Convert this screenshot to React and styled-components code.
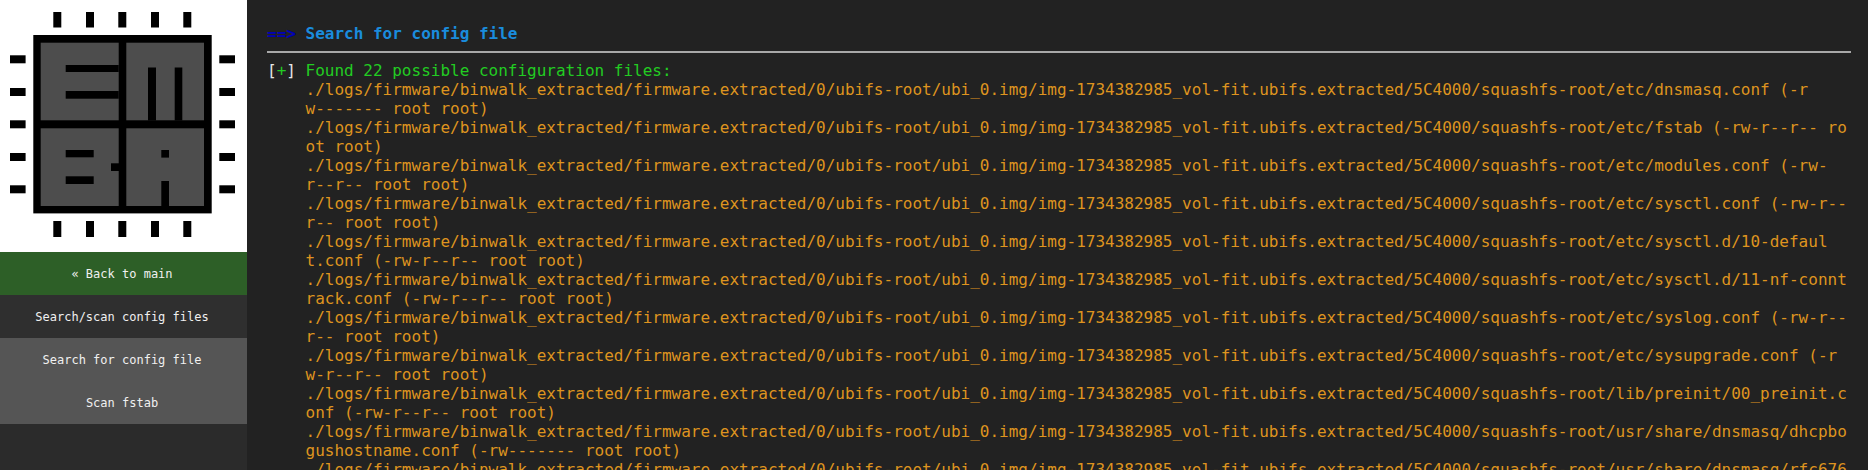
import React from "react";
import styled, { createGlobalStyle } from "styled-components";

const ROOT = "./logs/firmware/binwalk_extracted/firmware.extracted/0/ubifs-root/ubi_0.img/img-1734382985_vol-fit.ubifs.extracted/5C4000/squashfs-root";

// the tool output wraps at fixed places, so the breaks are kept in the data
const FILES = [
  "/etc/dnsmasq.conf (-r\nw------- root root)",
  "/etc/fstab (-rw-r--r-- ro\not root)",
  "/etc/modules.conf (-rw-\nr--r-- root root)",
  "/etc/sysctl.conf (-rw-r--\nr-- root root)",
  "/etc/sysctl.d/10-defaul\nt.conf (-rw-r--r-- root root)",
  "/etc/sysctl.d/11-nf-connt\nrack.conf (-rw-r--r-- root root)",
  "/etc/syslog.conf (-rw-r--\nr-- root root)",
  "/etc/sysupgrade.conf (-r\nw-r--r-- root root)",
  "/lib/preinit/00_preinit.c\nonf (-rw-r--r-- root root)",
  "/usr/share/dnsmasq/dhcpbo\ngushostname.conf (-rw------- root root)",
  "/usr/share/dnsmasq/rfc676\n1.conf (-rw-r--r-- root root)",
];

const MENU = [
  { label: "« Back to main", kind: "back" },
  { label: "Search/scan config files", kind: "section" },
  { label: "Search for config file", kind: "item" },
  { label: "Scan fstab", kind: "item" },
];

const MENU_BG = { back: "#2d5f27", section: "#2f2f2f", item: "#555555" };

/* pin offsets shared by all four sides of the chip */
const PINS_X = [53.3, 86, 118.3, 151, 183.3];
const PINS_Y = [55.3, 88, 120.3, 153, 185.3];

const GlobalStyle = createGlobalStyle`
  html, body { margin: 0; padding: 0; height: 100%; background: #222222; overflow: hidden; }
  #root { height: 100%; }
`;

const Page = styled.div`
  display: flex;
  height: 470px;
  overflow: hidden;
  font-family: "DejaVu Sans Mono", monospace;
`;

const Sidebar = styled.nav`
  flex: 0 0 247px;
  display: flex;
  flex-direction: column;
  background: #2b2b2b;
`;

const LogoBox = styled.div`
  height: 252px;
  background: #ffffff;
  svg { display: block; }
`;

const MenuLink = styled.a`
  display: flex;
  align-items: center;
  justify-content: center;
  height: 43px;
  padding-right: 3px;
  font-size: 12px;
  color: #f0f0f0;
  background: ${({ $kind }) => MENU_BG[$kind]};
`;

const Main = styled.main`
  flex: 1;
  min-width: 0;
  height: 470px;
  overflow: hidden;
  padding: 24px 17px 0 20px;
  box-sizing: border-box;
  background: #222222;
  font-size: 16px;
  line-height: 19px;
`;

const Heading = styled.h2`
  margin: 0;
  font-size: 16px;
  line-height: 19px;
  font-weight: 700;
  color: #1a8cdd;
  white-space: pre;
`;

const Arrow = styled.span`
  color: #0000b8;
`;

const Rule = styled.hr`
  margin: 8px 0 0;
  height: 2px;
  border: 0;
  background: #a8a8a8;
`;

const Result = styled.div`
  display: flex;
  margin-top: 8px;
`;

const Marker = styled.div`
  flex: 0 0 4ch;
  color: #e6e6e6;
  white-space: pre;
  span { color: #22cc22; }
`;

const Lines = styled.div`
  flex: 1;
  min-width: 0;
`;

const Found = styled.div`
  color: #22cc22;
`;

const FileLine = styled.div`
  color: #de941f;
  white-space: pre;
`;

function Logo() {
  return (
    <svg width="247" height="252" viewBox="0 0 247 252" aria-label="EMBA logo">
      {PINS_X.map((x) => (
        <React.Fragment key={x}>
          <rect x={x} y="12" width="8" height="15.5" fill="#000" />
          <rect x={x} y="221" width="8" height="16" fill="#000" />
        </React.Fragment>
      ))}
      {PINS_Y.map((y) => (
        <React.Fragment key={y}>
          <rect x="10" y={y} width="15.6" height="8" fill="#000" />
          <rect x="219.3" y={y} width="15.7" height="8" fill="#000" />
        </React.Fragment>
      ))}
      <rect x="33.3" y="35" width="178.4" height="178.4" fill="#000" />
      <rect x="40.7" y="42.7" width="78" height="77.6" fill="#4d4d4d" />
      <rect x="126.3" y="42.7" width="77.7" height="77.6" fill="#4d4d4d" />
      <rect x="40.7" y="128.3" width="78" height="77.7" fill="#4d4d4d" />
      <rect x="126.3" y="128.3" width="77.7" height="77.7" fill="#4d4d4d" />
      {/* E */}
      <rect x="65.7" y="65" width="53" height="7" fill="#000" />
      <rect x="65.7" y="91" width="53" height="7.7" fill="#000" />
      {/* M */}
      <rect x="148" y="67.5" width="8" height="53" fill="#000" />
      <rect x="174.7" y="67.5" width="7.6" height="53" fill="#000" />
      {/* B */}
      <rect x="65.7" y="150" width="28" height="7.3" fill="#000" />
      <rect x="65.7" y="176.3" width="28" height="7.7" fill="#000" />
      <rect x="111" y="163.3" width="8" height="7.7" fill="#000" />
      {/* A */}
      <rect x="161.3" y="150" width="7.7" height="7.6" fill="#000" />
      <rect x="161.3" y="181" width="7.7" height="25" fill="#000" />
    </svg>
  );
}

export default function App() {
  return (
    <Page>
      <GlobalStyle />
      <Sidebar>
        <LogoBox>
          <Logo />
        </LogoBox>
        {MENU.map((m) => (
          <MenuLink key={m.label} $kind={m.kind}>
            {m.label}
          </MenuLink>
        ))}
      </Sidebar>
      <Main>
        <Heading>
          <Arrow>==&gt; </Arrow>Search for config file
        </Heading>
        <Rule />
        <Result>
          <Marker>
            [<span>+</span>]
          </Marker>
          <Lines>
            <Found>Found 22 possible configuration files:</Found>
            {FILES.map((f) => (
              <FileLine key={f}>{`${ROOT}${f}`}</FileLine>
            ))}
          </Lines>
        </Result>
      </Main>
    </Page>
  );
}
